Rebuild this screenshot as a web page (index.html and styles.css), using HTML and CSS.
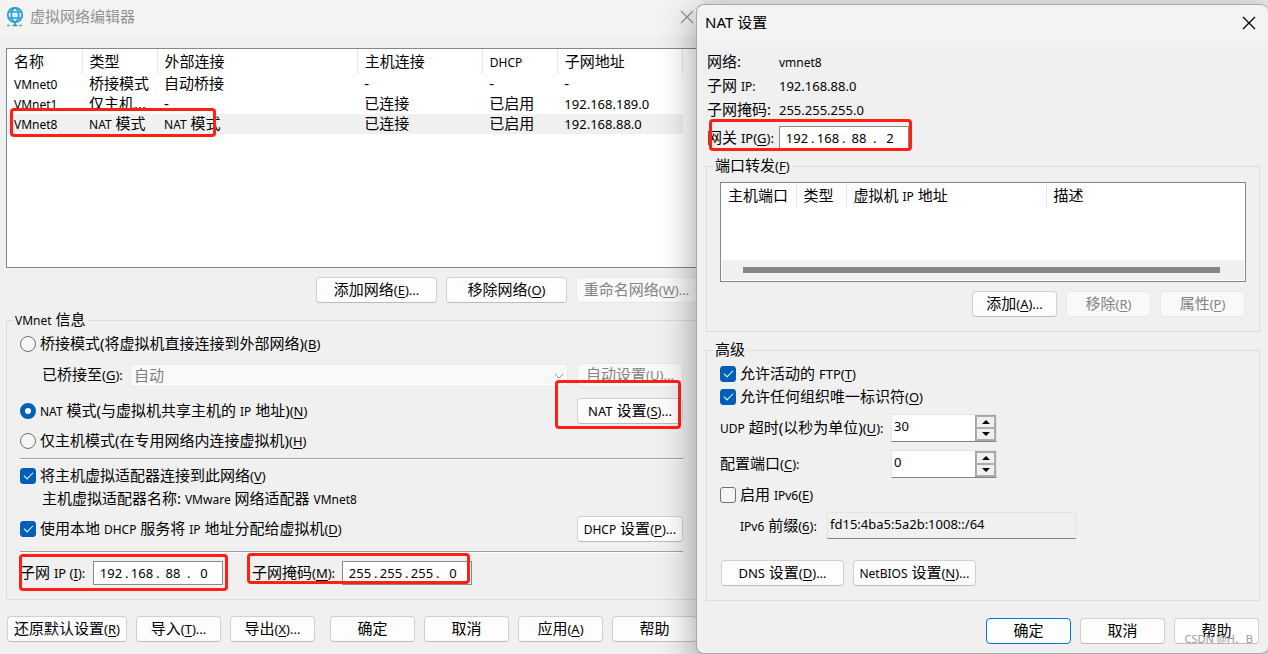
FILE: index.html
```html
<!DOCTYPE html>
<html lang="zh-CN">
<head>
<meta charset="utf-8">
<title>虚拟网络编辑器</title>
<link rel="stylesheet" href="styles.css">
</head>
<body>
<main class="desktop">
  <section class="window editor" aria-label="虚拟网络编辑器">
    <header class="titlebar">
      <svg class="app-icon" width="18" height="20" viewBox="0 0 18 20" fill="none">
        <circle cx="9" cy="8" r="7.2" fill="#d9f1fb" stroke="#2a9fd8" stroke-width="1.8"/>
        <ellipse cx="9" cy="8" rx="3.6" ry="7" stroke="#2a9fd8" stroke-width="1.6"/>
        <path d="M2 5h14M2 11h14" stroke="#2a9fd8" stroke-width="1.6"/>
        <path d="M9 15v3M6.5 18.5h5" stroke="#2b9e9a" stroke-width="1.6"/>
        <path d="M1 18.5h4M13 18.5h4" stroke="#4fb59a" stroke-width="1.6" stroke-dasharray="3 1"/>
      </svg>
      <h1>虚拟网络编辑器</h1>
      <button class="close" aria-label="关闭"><svg width="14" height="14" viewBox="0 0 14 14"><path d="M1 1l12 12M13 1L1 13" stroke="currentColor" stroke-width="1.2"/></svg></button>
    </header>
    <div class="content">
      <div class="list networks">
        <table>
          <colgroup><col class="c75"><col class="c75"><col class="c200"><col class="c125"><col class="c75"><col class="c125"></colgroup>
          <thead><tr><th>名称</th><th>类型</th><th>外部连接</th><th>主机连接</th><th><span class="en">DHCP</span></th><th>子网地址</th></tr></thead>
          <tbody>
            <tr><td><span class="en">VMnet0</span></td><td>桥接模式</td><td>自动桥接</td><td>-</td><td>-</td><td>-</td></tr>
            <tr><td><span class="en">VMnet1</span></td><td>仅主机...</td><td>-</td><td>已连接</td><td>已启用</td><td><span class="num">192.168.189.0</span></td></tr>
            <tr class="selected"><td><span class="en">VMnet8</span></td><td><span class="en">NAT</span> 模式</td><td><span class="en">NAT</span> 模式</td><td>已连接</td><td>已启用</td><td><span class="num">192.168.88.0</span></td></tr>
          </tbody>
        </table>
      </div>
      <div class="actions">
        <button class="btn wide">添加网络<span class="num">(<u>E</u>)...</span></button>
        <button class="btn wide">移除网络<span class="num">(<u>O</u>)</span></button>
        <button class="btn wide" disabled>重命名网络<span class="num">(<u>W</u>)...</span></button>
      </div>
      <fieldset class="group">
        <legend><span class="en">VMnet</span> 信息</legend>
        <div class="rows">
          <div class="row"><label><input type="radio" name="mode"><span>桥接模式(将虚拟机直接连接到外部网络)<span class="num">(<u>B</u>)</span></span></label></div>
          <div class="row bridge">
            <label for="bridge"><span>已桥接至<span class="num">(<u>G</u>):</span></span></label>
            <span class="combo"><select id="bridge" disabled><option>自动</option></select><svg width="10" height="6" viewBox="0 0 10 6" fill="none"><path d="M1 1l4 4 4-4" stroke="#999"/></svg></span>
            <button class="btn side" disabled>自动设置<span class="num">(<u>U</u>)...</span></button>
          </div>
          <div class="row nat"><label><input type="radio" name="mode" checked><span><span class="en">NAT</span> 模式(与虚拟机共享主机的 <span class="en">IP</span> 地址)<span class="num">(<u>N</u>)</span></span></label>
            <button class="btn side"><span class="num">NAT</span> 设置<span class="num">(<u>S</u>)...</span></button></div>
          <div class="row host"><label><input type="radio" name="mode"><span>仅主机模式(在专用网络内连接虚拟机)<span class="num">(<u>H</u>)</span></span></label></div>
          <hr>
          <div class="row"><label><input type="checkbox" checked><span>将主机虚拟适配器连接到此网络<span class="num">(<u>V</u>)</span></span></label></div>
          <p class="adapter">主机虚拟适配器名称: <span class="en">VMware</span> 网络适配器 <span class="en">VMnet8</span></p>
          <div class="row dhcp"><label><input type="checkbox" checked><span>使用本地 <span class="en">DHCP</span> 服务将 <span class="en">IP</span> 地址分配给虚拟机<span class="num">(<u>D</u>)</span></span></label>
            <button class="btn side"><span class="en">DHCP</span> 设置<span class="num">(<u>P</u>)...</span></button></div>
          <hr class="second">
          <div class="row subnet">
            <label class="ip-label" for="sub1"><span>子网 <span class="num">IP (<u>I</u>):</span></span></label>
            <span class="ip"><input id="sub1" value="192"><i>.</i><input aria-label="子网 IP 2" value="168"><i>.</i><input aria-label="子网 IP 3" value="88"><i>.</i><input aria-label="子网 IP 4" value="0"></span>
            <label class="mask-label" for="mask1"><span>子网掩码<span class="num">(<u>M</u>):</span></span></label>
            <span class="ip"><input id="mask1" value="255"><i>.</i><input aria-label="子网掩码 2" value="255"><i>.</i><input aria-label="子网掩码 3" value="255"><i>.</i><input aria-label="子网掩码 4" value="0"></span>
          </div>
        </div>
      </fieldset>
      <footer class="footer">
        <button class="btn restore">还原默认设置<span class="num">(<u>R</u>)</span></button>
        <button class="btn">导入<span class="num">(<u>T</u>)...</span></button>
        <button class="btn">导出<span class="num">(<u>X</u>)...</span></button>
        <button class="btn ok">确定</button>
        <button class="btn">取消</button>
        <button class="btn">应用<span class="num">(<u>A</u>)</span></button>
        <button class="btn">帮助</button>
      </footer>
    </div>
    <div class="mark mark-vmnet"></div>
    <div class="mark mark-nat"></div>
    <div class="mark mark-subnet"></div>
    <div class="mark mark-mask"></div>
  </section>

  <section class="window settings" aria-label="NAT 设置">
    <header class="titlebar">
      <h1>NAT 设置</h1>
      <button class="close" aria-label="关闭"><svg width="14" height="14" viewBox="0 0 14 14"><path d="M1 1l12 12M13 1L1 13" stroke="currentColor" stroke-width="1.3"/></svg></button>
    </header>
    <div class="content">
      <dl class="info">
        <dt>网络:</dt><dd><span class="en">vmnet8</span></dd>
        <dt>子网 <span class="en">IP:</span></dt><dd>192.168.88.0</dd>
        <dt>子网掩码:</dt><dd>255.255.255.0</dd>
      </dl>
      <div class="gateway">
        <label for="gw1"><span>网关 <span class="num">IP(<u>G</u>):</span></span></label>
        <span class="ip"><input id="gw1" value="192"><i>.</i><input aria-label="网关 IP 2" value="168"><i>.</i><input aria-label="网关 IP 3" value="88"><i>.</i><input aria-label="网关 IP 4" value="2"></span>
      </div>
      <fieldset class="group forward">
        <legend>端口转发<span class="num">(<u>F</u>)</span></legend>
        <div class="list ports">
          <table>
            <colgroup><col class="c75"><col class="c50"><col class="c200"><col></colgroup>
            <thead><tr><th>主机端口</th><th>类型</th><th>虚拟机 <span class="en">IP</span> 地址</th><th>描述</th></tr></thead>
          </table>
          <div class="scroll"><div class="thumb"></div></div>
        </div>
        <div class="actions">
          <button class="btn">添加<span class="num">(<u>A</u>)...</span></button>
          <button class="btn" disabled>移除<span class="num">(<u>R</u>)</span></button>
          <button class="btn" disabled>属性<span class="num">(<u>P</u>)</span></button>
        </div>
      </fieldset>
      <fieldset class="group advanced">
        <legend>高级</legend>
        <div class="check first"><label><input type="checkbox" checked><span>允许活动的 <span class="num">FTP(<u>T</u>)</span></span></label></div>
        <div class="check"><label><input type="checkbox" checked><span>允许任何组织唯一标识符<span class="num">(<u>O</u>)</span></span></label></div>
        <div class="spin-row">
          <label for="udp"><span><span class="en">UDP</span> 超时(以秒为单位)<span class="num">(<u>U</u>):</span></span></label>
          <span class="spin"><input id="udp" value="30"><span class="arrows"><button aria-label="增加"><svg width="8" height="4"><path d="M0 4l4-4 4 4z"/></svg></button><button aria-label="减少"><svg width="8" height="4"><path d="M0 0l4 4 4-4z"/></svg></button></span></span>
        </div>
        <div class="spin-row last">
          <label for="port"><span>配置端口<span class="num">(<u>C</u>):</span></span></label>
          <span class="spin"><input id="port" value="0"><span class="arrows"><button aria-label="增加"><svg width="8" height="4"><path d="M0 4l4-4 4 4z"/></svg></button><button aria-label="减少"><svg width="8" height="4"><path d="M0 0l4 4 4-4z"/></svg></button></span></span>
        </div>
        <div class="check"><label><input type="checkbox"><span>启用 <span class="en">IPv6</span><span class="num">(<u>E</u>)</span></span></label></div>
        <div class="prefix">
          <label for="prefix"><span><span class="en">IPv6</span> 前缀<span class="num">(<u>6</u>):</span></span></label>
          <input id="prefix" value="fd15:4ba5:5a2b:1008::/64" readonly>
        </div>
        <div class="more">
          <button class="btn wide"><span class="num">DNS</span> 设置<span class="num">(<u>D</u>)...</span></button>
          <button class="btn wide"><span class="en">NetBIOS</span> 设置<span class="num">(<u>N</u>)...</span></button>
        </div>
      </fieldset>
      <footer class="footer">
        <button class="btn default">确定</button>
        <button class="btn">取消</button>
        <button class="btn">帮助</button>
      </footer>
    </div>
    <div class="mark mark-gateway"></div>
    <span class="watermark">CSDN @H、B</span>
  </section>
</main>
</body>
</html>
```
FILE: styles.css
```css
* { box-sizing: border-box; }
body { margin: 0; background: #ebebeb; overflow: hidden; }
body, button, input, select {
  font-family: "Noto Sans", "Noto Sans CJK SC", sans-serif;
  font-size: 15px;
  line-height: 20px;
  color: #000;
}
.en { font-size: 12px; line-height: 14px; }
.num { font-size: 13px; line-height: 14px; }
u { text-underline-offset: 2px; }

.desktop { display: grid; grid-template-columns: minmax(0, 696fr) minmax(0, 572fr); min-height: 100vh; }
.window { position: relative; background: #f0f0f0; }
.editor { margin-right: -12px; border-top-right-radius: 8px; border-right: 1px solid #ccc; }
.settings {
  z-index: 1;
  margin-top: 4px;
  border: 1px solid #a8a8a8;
  border-right: 0;
  border-radius: 8px;
  box-shadow: 0 10px 36px rgba(0, 0, 0, 0.4);
}
.titlebar { display: flex; align-items: center; background: #f3f3f3; border-radius: 8px 8px 0 0; }
.titlebar h1 { margin: 0; flex: 1; padding-bottom: 2px; font-size: 15px; font-weight: 400; }
.close { display: flex; padding: 0; border: 0; background: none; }
.editor .titlebar { height: 36px; padding: 0 13px 3px 6px; gap: 6px; }
.editor .titlebar h1, .editor .close { color: #919191; }
.settings .titlebar { height: 37px; padding: 0 12px 1px 8px; }

/* lists */
.list { background: #fff; border: 1px solid #828790; }
table { border-collapse: collapse; table-layout: fixed; }
th, td { padding: 0 0 2px 7px; height: 20px; text-align: left; font-weight: 400; line-height: 18px; white-space: nowrap; overflow: hidden; }
th { height: 25px; border-right: 1px solid #e5e5e5; }
.ports th:last-child { border-right: 0; }
.selected { background: #f0f0f0; }
.c50 { width: 50px; }
.c75 { width: 75px; }
.c125 { width: 125px; }
.c200 { width: 200px; }
.networks { height: 220px; overflow: hidden; }
.networks table { width: 676px; }
.ports { display: flex; flex-direction: column; justify-content: space-between; height: 100px; }
.ports table { width: 100%; }
.scroll { height: 20px; margin: 0 1px 1px; padding: 7px 24px 7px 21px; background: #f0f0f0; }
.thumb { height: 6px; background: #858585; }

/* buttons */
.btn {
  flex: none;
  width: 85px;
  height: 26px;
  padding: 0 0 2px;
  border: 1px solid #d0d0d0;
  border-bottom-color: #bcbcbc;
  border-radius: 4px;
  background: #fdfdfd;
  white-space: nowrap;
}
.btn:disabled { color: #838383; background: #f9f9f9; border-color: #e8e8e8; }
.btn.wide { width: 121px; }
.btn.restore { width: 120px; }
.btn.side { width: 106px; margin-left: auto; }
.btn.default { border-color: #0078d4; }
.actions, .footer { display: flex; justify-content: flex-end; gap: 9px; }

/* groups */
.group { min-width: 0; margin: 0; border: 1px solid #dcdcdc; padding: 0 13px; }
legend { height: 20px; margin-left: -7px; padding: 0 2px; line-height: 18px; }
label { display: flex; align-items: center; white-space: nowrap; }
label > span { padding-bottom: 2px; }

/* choice controls */
input[type="radio"], input[type="checkbox"] {
  position: relative;
  appearance: none;
  flex: none;
  width: 16px;
  height: 16px;
  margin: 0 4px 0 0;
  border: 1px solid #707070;
  border-radius: 3px;
  background: #f6f6f6;
}
input[type="radio"] { border-radius: 50%; }
input[type="radio"]:checked { border: 5px solid #005fb8; background: #fff; }
input[type="checkbox"]:checked { border-color: #005fb8; background: #005fb8; }
input[type="checkbox"]:checked::after {
  content: "";
  position: absolute;
  left: 3px;
  top: 3px;
  width: 8px;
  height: 4px;
  border: solid #fff;
  border-width: 0 0 1px 1px;
  transform: rotate(-45deg);
}

/* editor window */
.editor .content { padding: 12px 10px 0 6px; }
.editor .actions { margin: 9px 0 7px; }
.editor .group { padding-top: 1px; padding-bottom: 13px; }
.row { display: flex; align-items: center; height: 26px; }
.bridge { margin-top: 5px; padding-left: 22px; }
.bridge label { width: 88px; }
.bridge .btn { height: 24px; margin-left: 9px; }
.combo { position: relative; flex: 1; display: flex; }
.combo select { appearance: none; width: 100%; height: 23px; padding: 0 3px 2px; border: 1px solid #e9e9e9; border-radius: 0; background: #f9f9f9; color: #808080; opacity: 1; }
.combo svg { position: absolute; right: 4px; top: 9px; }
.nat { margin-top: 10px; }
.host { margin-top: 4px; }
hr { height: 2px; margin: 4px 0 3px; border: 0; border-top: 1px solid #a0a0a0; border-bottom: 1px solid #fff; }
.adapter { height: 20px; margin: 0 0 7px 22px; line-height: 18px; }
.dhcp { margin-bottom: 9px; }
hr.second { margin: 0 0 7px; }
.ip-label { width: 73px; }
.mask-label { width: 90px; margin-left: 29px; }
.ip { display: flex; align-items: center; width: 130px; height: 24px; padding: 0 2px 0 3px; border: 1px solid #8a8a8a; background: #fff; font-size: 13px; }
.ip input { width: 28px; min-width: 0; height: 20px; padding: 0; border: 0; background: none; text-align: center; font-size: 13px; }
.ip i { width: 3px; font-style: normal; }
.editor .footer { margin-top: 16px; justify-content: flex-start; padding-left: 1px; }
.editor .ok { margin-left: 6px; }

/* settings window */
.settings .content { padding: 8px 8px 8px 9px; }
.info { display: grid; grid-template-columns: 72px 1fr; grid-auto-rows: 24px; align-items: center; margin: 0 0 4px 1px; }
.info dt { white-space: nowrap; padding-bottom: 2px; }
.info dd { margin: 0; font-size: 13px; }
.gateway { display: flex; align-items: center; padding-left: 1px; height: 24px; margin-bottom: 6px; }
.gateway label { width: 72px; }
.forward { padding-bottom: 14px; }
.ports { margin-top: 6px; }
.forward .actions { margin: 9px 1px 0 0; }
.settings .advanced { margin-top: 8px; padding-bottom: 14px; }
.check { display: flex; align-items: center; height: 23px; }
.check.first { margin-top: 2px; }
.spin-row { display: flex; align-items: center; height: 28px; margin: 6px 0 8px; }
.spin-row.last { margin-bottom: 5px; }
.spin-row label { width: 171px; }
.spin { display: flex; height: 28px; width: 106px; background: #fff; border: 1px solid #e5e5e5; border-bottom-color: #858585; }
.spin input { flex: 1; min-width: 0; padding: 0 2px 4px; border: 0; background: none; font-size: 13px; }
.arrows { display: flex; flex-direction: column; width: 21px; border: 1px solid #a6a6a6; background: #f0f0f0; }
.arrows button { flex: 1; display: flex; align-items: center; justify-content: center; padding: 0; border: 1px solid #adadad; background: #f0f0f0; }
.prefix { display: flex; align-items: center; margin: 6px 0 21px 20px; }
.prefix label { width: 87px; }
.prefix input { width: 249px; height: 27px; padding: 0 2px 4px; border: 1px solid #e4e4e4; border-bottom-color: #858585; background: #f0f0f0; font-size: 13px; }
.more { display: flex; gap: 9px; padding-left: 1px; }
.more .btn.wide { width: 123px; }
.settings .footer { margin: 17px 1px 0 0; }

/* annotations */
.mark { position: absolute; border: 3px solid #ff2015; border-radius: 4px; }
.mark-vmnet { left: 10px; top: 108px; width: 206px; height: 29px; }
.mark-nat { left: 555px; top: 380px; width: 126px; height: 49px; }
.mark-subnet { left: 19px; top: 554px; width: 209px; height: 37px; }
.mark-mask { left: 247px; top: 553px; width: 223px; height: 31px; }
.mark-gateway { left: 12px; top: 114px; width: 203px; height: 32px; }
.watermark { position: absolute; right: 15px; bottom: 6px; font-size: 11px; line-height: 16px; color: #9a9a9a; }
```
